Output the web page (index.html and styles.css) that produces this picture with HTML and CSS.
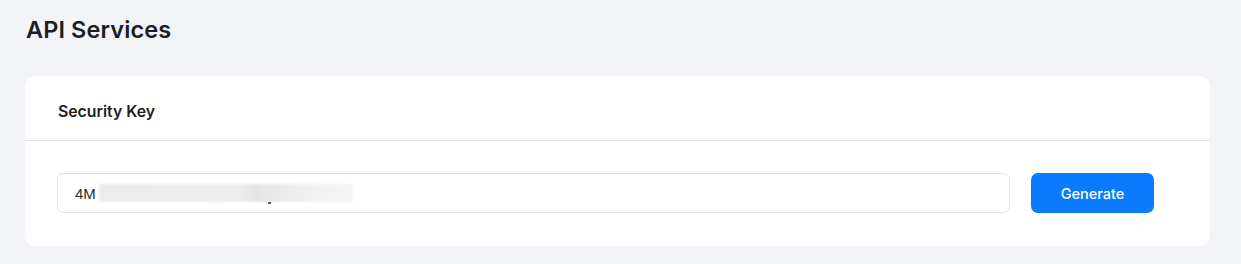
FILE: index.html
```html
<!DOCTYPE html>
<html lang="en">
<head>
<meta charset="utf-8">
<title>API Services</title>
<link rel="stylesheet" href="styles.css">
</head>
<body>
<main class="page">
  <h1 class="page-title">API Services</h1>
  <section class="card">
    <header class="card-header">
      <h2 class="card-title">Security Key</h2>
    </header>
    <div class="card-body">
      <div class="key-field">
        <span class="key-text">4M</span>
        <span class="key-mask"></span>
        <span class="key-tick"></span>
      </div>
      <button class="btn-generate" type="button">Generate</button>
    </div>
  </section>
</main>
</body>
</html>
```
FILE: styles.css
```css
* { box-sizing: border-box; }
html, body {
  margin: 0;
  padding: 0;
  background: #f2f3f7;
  font-family: Inter, "Noto Sans", sans-serif;
  color: #1d1e24;
}
.page {
  padding: 13px 31px 0 25px;
}
.page-title {
  margin: 0 0 0 1px;
  font-size: 23.5px;
  font-weight: 600;
  line-height: 34px;
  letter-spacing: 0.1px;
}
.card {
  margin-top: 29px;
  background: #fff;
  border-radius: 10px;
  height: 170px;
}
.card-header {
  height: 65px;
  padding: 7px 32px 0 33px;
  display: flex;
  align-items: center;
  border-bottom: 1px solid #e3e4e8;
}
.card-title {
  margin: 0;
  font-size: 15.8px;
  font-weight: 600;
  color: #1d1e24;
}
.card-body {
  display: flex;
  align-items: center;
  gap: 21px;
  padding: 32px 56px 0 32px;
}
.key-field {
  position: relative;
  flex: 1;
  height: 40px;
  border: 1px solid #e2e3e6;
  border-radius: 6px;
  display: flex;
  align-items: center;
  padding-left: 17px;
  font-family: "Liberation Sans", Arial, sans-serif;
  font-size: 15px;
  color: #2a2b30;
}
.key-mask {
  display: block;
  width: 254px;
  height: 18px;
  margin-left: 3px;
  background: linear-gradient(90deg, #ececec 0%, #eeeeee 55%, #e4e4e4 62%, #efefef 80%, #f6f6f6 100%);
  filter: blur(1px);
}
.key-tick {
  position: absolute;
  left: 210px;
  top: 28px;
  width: 3px;
  height: 2px;
  background: #555;
  filter: blur(0.4px);
}
.btn-generate {
  width: 123px;
  height: 40px;
  border: 0;
  border-radius: 7px;
  background: #0a7bff;
  color: #fff;
  font-family: Inter, "Noto Sans", sans-serif;
  font-size: 14.5px;
  font-weight: 500;
  cursor: pointer;
}
```
